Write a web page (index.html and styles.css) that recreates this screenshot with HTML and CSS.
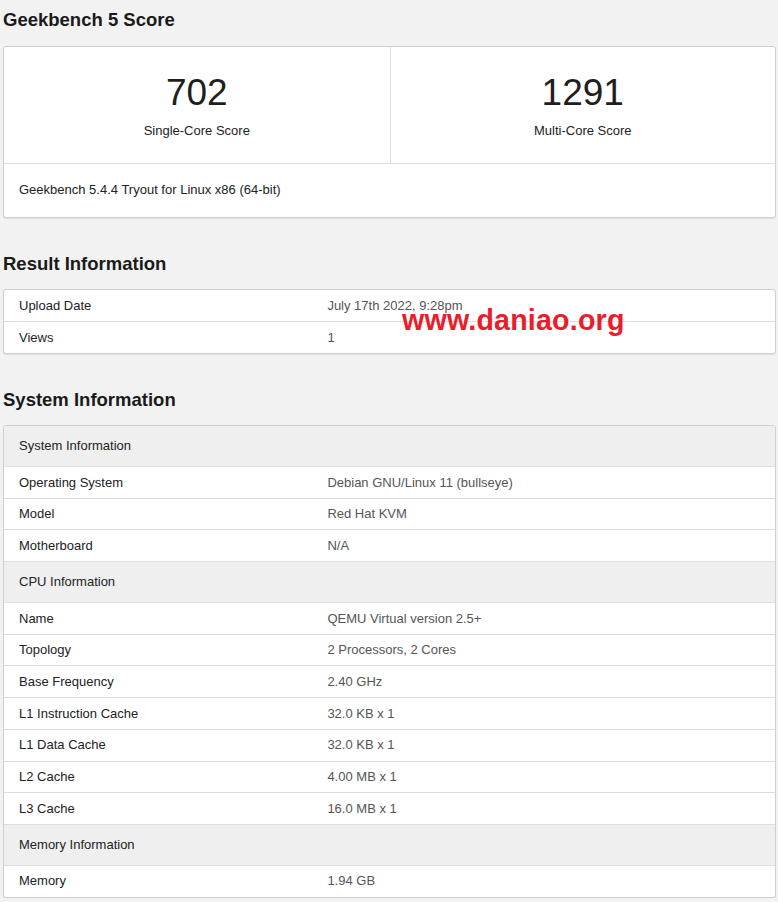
FILE: index.html
```html
<!DOCTYPE html>
<html lang="en">
<head>
  <meta charset="UTF-8" />
  <meta name="viewport" content="width=device-width, initial-scale=1.0"/>
  <title>Geekbench 5 Score</title>
  <link rel="stylesheet" href="styles.css">
</head>
<body>

  <h2 class="section-title first">Geekbench 5 Score</h2>

  <div class="card">
    <div class="scores">
      <div class="score">
        <div class="score-value">702</div>
        <div class="score-label">Single-Core Score</div>
      </div>
      <div class="score">
        <div class="score-value">1291</div>
        <div class="score-label">Multi-Core Score</div>
      </div>
    </div>
    <div class="score-footer">Geekbench 5.4.4 Tryout for Linux x86 (64-bit)</div>
  </div>

  <h2 class="section-title">Result Information</h2>

  <div class="card watermarked">
    <table class="info-table result-table">
      <tr><td class="name">Upload Date</td><td class="value">July 17th 2022, 9:28pm</td></tr>
      <tr><td class="name">Views</td><td class="value">1</td></tr>
    </table>
    <span class="watermark">www.daniao.org</span>
  </div>

  <h2 class="section-title">System Information</h2>

  <div class="card">
    <table class="info-table">
      <tr class="group"><td colspan="2">System Information</td></tr>
      <tr><td class="name">Operating System</td><td class="value">Debian GNU/Linux 11 (bullseye)</td></tr>
      <tr><td class="name">Model</td><td class="value">Red Hat KVM</td></tr>
      <tr><td class="name">Motherboard</td><td class="value">N/A</td></tr>
      <tr class="group"><td colspan="2">CPU Information</td></tr>
      <tr><td class="name">Name</td><td class="value">QEMU Virtual version 2.5+</td></tr>
      <tr><td class="name">Topology</td><td class="value">2 Processors, 2 Cores</td></tr>
      <tr><td class="name">Base Frequency</td><td class="value">2.40 GHz</td></tr>
      <tr><td class="name">L1 Instruction Cache</td><td class="value">32.0 KB x 1</td></tr>
      <tr><td class="name">L1 Data Cache</td><td class="value">32.0 KB x 1</td></tr>
      <tr><td class="name">L2 Cache</td><td class="value">4.00 MB x 1</td></tr>
      <tr><td class="name">L3 Cache</td><td class="value">16.0 MB x 1</td></tr>
      <tr class="group"><td colspan="2">Memory Information</td></tr>
      <tr><td class="name">Memory</td><td class="value">1.94 GB</td></tr>
    </table>
  </div>

</body>
</html>
```

FILE: styles.css
```css
:root {
  --page-bg: #f2f2f2;
  --card-border: #cfcfcf;
  --row-border: #dedede;
  --group-bg: #efefef;
  --text-dark: #222;
  --text-muted: #555;
}

body {
  font-family: "Liberation Sans", Arial, sans-serif;
  font-size: 13px;
  background-color: var(--page-bg);
  color: var(--text-dark);
  margin: 0;
  padding: 9px 2px 0 3px;
}

.section-title {
  font-size: 18.5px;
  font-weight: 700;
  line-height: 22px;
  margin: 35px 0 14px;
  color: #1a1a1a;
}

.section-title.first {
  margin-top: 0;
  margin-bottom: 15px;
}

.card {
  background: #fff;
  border: 1px solid var(--card-border);
  border-radius: 3px;
  box-shadow: 0 1px 1px rgba(0, 0, 0, 0.08);
  overflow: hidden;
}

.watermarked {
  position: relative;
}

.scores {
  display: grid;
  grid-template-columns: 1fr 1fr;
  border-bottom: 1px solid var(--row-border);
}

.score {
  text-align: center;
  padding: 24px 0 24px;
}

.score + .score {
  border-left: 1px solid var(--row-border);
}

.score-value {
  font-size: 37px;
  line-height: 44px;
  color: #1e1e1e;
}

.score-label {
  margin-top: 8px;
  line-height: 16px;
}

.score-footer {
  padding: 18px 15px 19px;
  line-height: 16px;
}

.info-table {
  width: 100%;
  border-collapse: collapse;
}

.info-table td {
  padding: 7.5px 15px 7.2px;
  line-height: 16px;
  border-top: 1px solid var(--row-border);
}

.result-table td {
  padding: 8px 15px 7px;
}

.info-table tr:first-child td {
  border-top: none;
}

.info-table .name {
  width: 40%;
  color: var(--text-dark);
}

.info-table .value {
  color: var(--text-muted);
}

.info-table .group td {
  background: var(--group-bg);
  padding: 12px 15px;
}

.watermark {
  position: absolute;
  left: 398px;
  top: 16px;
  font-size: 28.6px;
  line-height: 1;
  font-weight: 700;
  color: #ec1c2b;
  letter-spacing: 0.2px;
}
```
